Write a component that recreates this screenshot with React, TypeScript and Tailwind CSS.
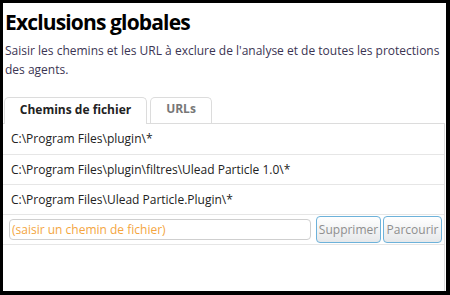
import React from "react";

const rows = [
  "C:\\Program Files\\plugin\\*",
  "C:\\Program Files\\plugin\\filtres\\Ulead Particle 1.0\\*",
  "C:\\Program Files\\Ulead Particle.Plugin\\*",
];

export default function App() {
  return (
    <div className="w-[450px] h-[295px] bg-black pt-[3px] pl-[3px] pr-[4px] pb-[4px] font-['Open_Sans','Noto_Sans',sans-serif]">
      <div className="bg-white h-full flex flex-col">
        <h1 className="mt-[5px] pl-[2px] text-[21px] leading-[28px] font-bold tracking-[-0.85px] text-black">
          Exclusions globales
        </h1>
        <p className="mt-[5px] pl-[2px] text-[12px] leading-[19px] text-[#3b3553]">
          Saisir les chemins et les URL à exclure de l'analyse et de toutes les protections des agents.
        </p>
        <div className="mt-[18px] flex items-end pl-[1px] gap-[3px]">
          <div className="relative z-10 w-[143px] h-[27px] -mb-px border border-b-0 border-[#dcdcdc] rounded-t-[5px] bg-white pt-[3px] text-center text-[12px] leading-[18px] font-bold text-[#222]">
            Chemins de fichier
          </div>
          <div className="w-[62px] h-[26px] border border-b-0 border-[#dcdcdc] rounded-t-[5px] bg-white pt-[2px] text-center text-[12px] leading-[18px] font-bold text-[#777]">
            URLs
          </div>
        </div>
        <div className="mr-[1px] border-t border-r border-[#dcdcdc] flex-1 flex flex-col">
          {rows.map((r, i) => (
            <div
              key={i}
              className={`${i === 0 ? "h-[31px]" : "h-[30px]"} border-b border-[#e6e6e6] flex items-center pl-[8px] text-[12px] leading-[18px] text-[#222]`}
            >
              {r}
            </div>
          ))}
          <div className="h-[30px] border-b border-[#e6e6e6] flex items-center pl-[6px] pr-[2px]">
            <input
              className="w-[302px] h-[21px] border border-[#cfcfcf] rounded-[4px] pl-[2px] text-[12px] leading-[18px] outline-none placeholder:text-[#f4a63f] font-['Open_Sans',sans-serif]"
              placeholder="(saisir un chemin de fichier)"
            />
            <button className="ml-[5px] w-[65px] h-[27px] border border-[#6db2da] rounded-[4px] bg-gradient-to-b from-white to-[#e6e8ea] text-[12px] leading-[18px] text-[#8e8e8e] px-0 font-['Open_Sans',sans-serif]">
              Supprimer
            </button>
            <button className="ml-[2px] w-[59px] h-[27px] border border-[#6db2da] rounded-[4px] bg-gradient-to-b from-white to-[#e6e8ea] text-[12px] leading-[18px] text-[#8e8e8e] px-0 font-['Open_Sans',sans-serif]">
              Parcourir
            </button>
          </div>
        </div>
      </div>
    </div>
  );
}
